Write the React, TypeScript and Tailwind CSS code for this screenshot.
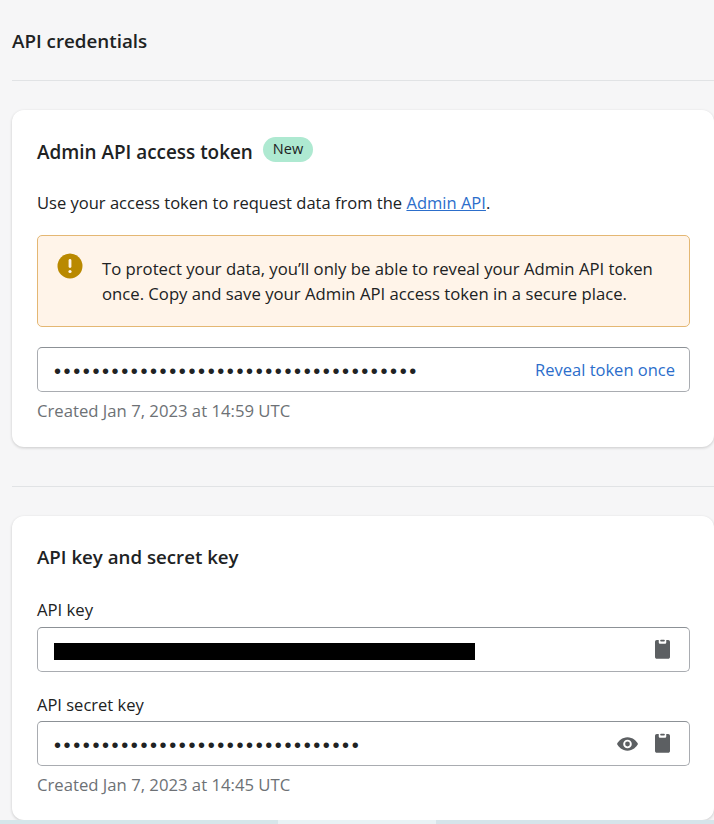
const dots = (n: number) => "•".repeat(n);

function Clipboard() {
  return (
    <svg viewBox="0 0 16 21" className="w-[15px] h-[20px]">
      <path fill="#5c5f62" d="M0 3c0-1 .7-2 2-2h2v2.500c0 .9.7 1.500 1.500 1.500h5c.8 0 1.500-.6 1.500-1.500V1h2c1.300 0 2 1 2 2v16c0 1.200-.9 2-2 2H2c-1.100 0-2-.8-2-2V3Z" />
      <rect x="5.500" y="0.500" width="5" height="2" rx="1" fill="#5c5f62" />
    </svg>
  );
}

function Eye() {
  return (
    <svg viewBox="0 0 22 14" className="w-[21px] h-[14px] text-[#5c5f62]" fill="currentColor">
      <path fillRule="evenodd" d="M11 0C5.500 0 1.500 4 0 7c1.500 3 5.500 7 11 7s9.500-4 11-7c-1.500-3-5.500-7-11-7Zm0 11.500a4.500 4.500 0 1 1 0-9 4.500 4.500 0 0 1 0 9Z" />
      <circle cx="11" cy="7" r="2.500" />
    </svg>
  );
}

function Field({ children }: { children: React.ReactNode }) {
  return (
    <div className="flex items-center h-[45px] rounded-[5px] border border-[#a9acb1] border-t-[#8c9196] bg-white pl-4 pr-[14px]">
      {children}
    </div>
  );
}

function Dots({ n }: { n: number }) {
  return (
    <span className="mt-[2px] font-['Liberation_Sans',sans-serif] text-[20px] tracking-[2.6px] text-[#202223] leading-none">
      {dots(n)}
    </span>
  );
}

export default function App() {
  return (
    <div className="relative w-[714px] h-[824px] overflow-hidden bg-[#f6f6f7] pl-3 font-['Open_Sans','Noto_Sans',sans-serif] text-[#202223]">
      <h1 className="h-[80px] flex items-center text-[18.8px] font-semibold pt-[2px]">API credentials</h1>
      <div className="h-px bg-[#e1e3e5]" />

      <section className="mt-[29px] h-[337px] rounded-xl bg-white shadow-[0_1px_3px_rgba(23,24,24,0.2)] pl-[25px] pr-[24px]">
        <div className="flex items-center pt-[24px] h-[60px]">
          <h2 className="text-[18.9px] font-semibold">Admin API access token</h2>
          <span className="ml-[10px] -mt-[6px] flex items-center h-[25px] rounded-full bg-[#aee9d1] px-[10px] text-[14.5px]">New</span>
        </div>
        <p className="mt-[21px] text-[16.55px] leading-[24px]">
          Use your access token to request data from the{" "}
          <span className="text-[#2c6ecb] underline">Admin API</span>.
        </p>
        <div className="mt-[20px] flex h-[92px] rounded-[5px] border border-[#e4b773] bg-[#fff4e9] pl-[19px] pt-[20px]">
          <svg viewBox="0 0 26 26" className="w-[26px] h-[26px] shrink-0 -mt-[3px]">
            <circle cx="13" cy="13" r="12.500" fill="#b98900" />
            <rect x="11.600" y="6" width="2.800" height="9" rx="1.400" fill="#fff4e9" />
            <circle cx="13" cy="18.500" r="1.600" fill="#fff4e9" />
          </svg>
          <p className="ml-[19px] text-[16.7px] leading-[25px] whitespace-nowrap">
            To protect your data, you’ll only be able to reveal your Admin API token
            <br />
            once. Copy and save your Admin API access token in a secure place.
          </p>
        </div>
        <div className="mt-[20px]">
          <Field>
            <Dots n={38} />
            <span className="ml-auto mt-[2px] text-[16.5px] text-[#2c6ecb]">Reveal token once</span>
          </Field>
        </div>
        <p className="mt-[7px] text-[16.7px] leading-[24px] text-[#6d7175]">Created Jan 7, 2023 at 14:59 UTC</p>
      </section>

      <div className="mt-[39px] h-px bg-[#e1e3e5]" />

      <section className="mt-[29px] h-[304px] rounded-xl bg-white shadow-[0_1px_3px_rgba(23,24,24,0.2)] pl-[25px] pr-[24px] pt-[26px]">
        <h2 className="text-[18.7px] font-semibold leading-[30px]">API key and secret key</h2>
        <label className="block mt-[26px] text-[16.7px] leading-[24px]">API key</label>
        <div className="mt-[5px]">
          <Field>
            <div className="w-[421px] h-[17px] bg-black mt-[4px]" />
            <span className="ml-auto mr-[5px] -mt-[2px] flex"><Clipboard /></span>
          </Field>
        </div>
        <label className="block mt-[21px] text-[16.5px] leading-[24px]">API secret key</label>
        <div className="mt-[4px]">
          <Field>
            <Dots n={32} />
            <span className="ml-auto mr-[17px] flex"><Eye /></span>
            <span className="mr-[5px] -mt-[2px] flex"><Clipboard /></span>
          </Field>
        </div>
        <p className="mt-[7px] text-[16.7px] leading-[24px] text-[#6d7175]">Created Jan 7, 2023 at 14:45 UTC</p>
      </section>

      <div className="absolute left-0 right-0 bottom-0 h-[4px] flex">
        <div className="w-[278px] bg-[#d6e6ea]" />
        <div className="w-[158px] bg-[#e9f2f5]" />
        <div className="flex-1 bg-[#d6e4ea]" />
      </div>
    </div>
  );
}
